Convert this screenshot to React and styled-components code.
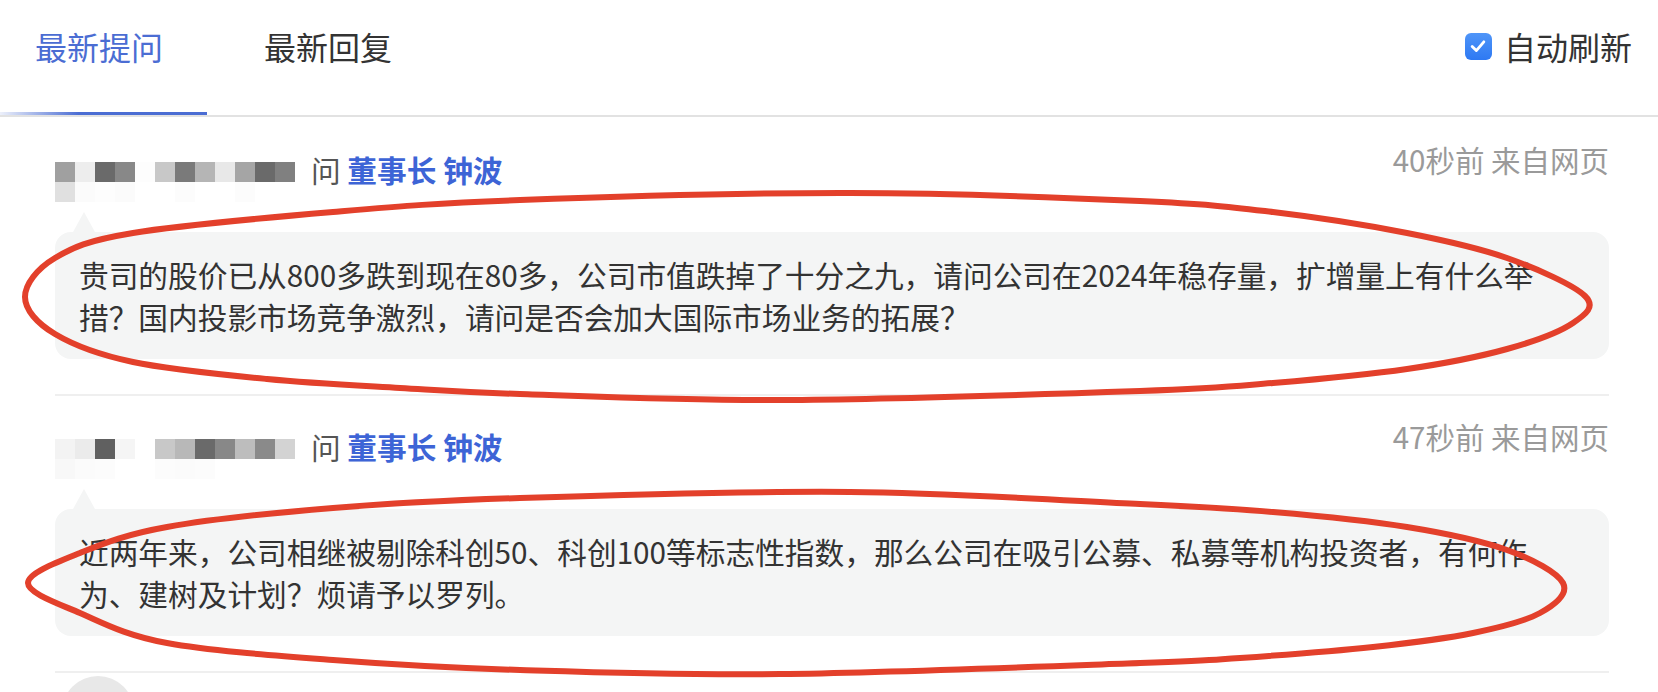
import React from "react";
import styled, { createGlobalStyle } from "styled-components";

const GlobalStyle = createGlobalStyle`
  *, *::before, *::after { box-sizing: border-box; }
  html, body { margin: 0; padding: 0; background: #ffffff; }
  body {
    font-family: "Noto Sans CJK SC", "Noto Sans", sans-serif;
    overflow: hidden;
  }
`;

const Page = styled.div`
  position: relative;
  width: 1658px;
  height: 692px;
  overflow: hidden;
  background: #ffffff;
`;

const Header = styled.header`
  display: flex;
  justify-content: space-between;
  align-items: stretch;
  height: 117px;
  padding: 0 26px 0 35px;
  border-bottom: 2px solid #e2e2e2;
`;

const Tabs = styled.nav`
  display: flex;
  gap: 101px;
`;

const Tab = styled.div`
  position: relative;
  padding-top: 26px;
  font-size: 32px;
  line-height: 40px;
  color: ${(p) => (p.$active ? "#4b6dd3" : "#333333")};

  &::after {
    content: "";
    display: ${(p) => (p.$active ? "block" : "none")};
    position: absolute;
    left: -35px;
    right: -44px;
    bottom: 0;
    height: 3px;
    background: linear-gradient(90deg, rgba(75, 109, 211, 0.1) 0%, #4b6dd3 38%);
  }
`;

const AutoRefresh = styled.label`
  display: flex;
  align-items: center;
  gap: 12px;
  align-self: flex-start;
  margin-top: 26px;
  height: 40px;
  font-size: 32px;
  line-height: 40px;
  color: #333333;
`;

const CheckBox = styled.span`
  display: flex;
  align-items: center;
  justify-content: center;
  width: 27px;
  height: 27px;
  border-radius: 6px;
  background: linear-gradient(180deg, #4f95f8 0%, #2e79f3 100%);
`;

const List = styled.div`
  display: flex;
  flex-direction: column;
  padding-top: 2px;
`;

const Item = styled.article`
  margin: 0 49px 0 55px;
  padding: 20px 0 35px;
  border-bottom: 2px solid #efefef;
`;

const Meta = styled.div`
  display: flex;
  justify-content: space-between;
  align-items: flex-start;
`;

const Author = styled.div`
  display: flex;
  align-items: flex-start;
  margin-top: 10.5px;
  font-size: 29.7px;
  line-height: 40px;
  color: #555555;
  white-space: pre;
`;

const Mosaic = styled.div`
  display: grid;
  grid-template-columns: repeat(12, 20px);
  grid-auto-rows: 20px;
  margin-top: 12px;
  margin-right: 16px;
`;

const Cell = styled.span`
  background: ${(p) => p.$c};
`;

const Names = styled.span`
  color: #3d64d6;
  font-weight: 700;
`;

const Time = styled.div`
  font-size: 29.5px;
  line-height: 40px;
  color: #9a9a9a;
`;

const Bubble = styled.div`
  position: relative;
  margin-top: 30.5px;
  padding: 22px 56px 22px 24px;
  background: #f4f5f5;
  border-radius: 16px;
  font-size: 29.7px;
  line-height: 41.5px;
  color: #333333;

  &::before {
    content: "";
    position: absolute;
    top: -20px;
    left: 18px;
    border-left: 11px solid transparent;
    border-right: 11px solid transparent;
    border-bottom: 20px solid #f4f5f5;
  }
`;

const NextItem = styled.div`
  margin: 0 49px 0 55px;
  padding: 3px 0 0 7px;
`;

const Avatar = styled.div`
  width: 72px;
  height: 72px;
  border-radius: 50%;
  background: #e8e8e8;
`;

const Annotations = styled.svg`
  position: absolute;
  top: 0;
  left: 0;
  width: 1658px;
  height: 692px;
  pointer-events: none;
`;

function smoothClosed(pts) {
  const n = pts.length;
  let d = `M${pts[0][0]},${pts[0][1]}`;
  for (let i = 0; i < n; i++) {
    const p0 = pts[(i - 1 + n) % n];
    const p1 = pts[i];
    const p2 = pts[(i + 1) % n];
    const p3 = pts[(i + 2) % n];
    const c1 = [p1[0] + (p2[0] - p0[0]) / 6, p1[1] + (p2[1] - p0[1]) / 6];
    const c2 = [p2[0] - (p3[0] - p1[0]) / 6, p2[1] - (p3[1] - p1[1]) / 6];
    d += ` C${c1[0].toFixed(1)},${c1[1].toFixed(1)} ${c2[0].toFixed(1)},${c2[1].toFixed(1)} ${p2[0]},${p2[1]}`;
  }
  return d + " Z";
}

const ring1 = [
  [25, 297], [55, 258], [133, 233], [333, 212], [520, 200], [850, 193],
  [1140, 201], [1273, 212], [1407, 233], [1507, 258], [1585, 296],
  [1573, 323], [1507, 349], [1407, 369], [1273, 383], [1140, 391],
  [780, 400], [520, 394], [400, 388], [267, 379], [133, 362], [55, 334],
];

const ring2 = [
  [28, 583], [80, 553], [167, 527], [333, 508], [520, 498], [850, 492],
  [1140, 504], [1273, 512], [1407, 527], [1507, 550], [1563, 583],
  [1540, 613], [1473, 633], [1373, 647], [1240, 658], [1140, 663],
  [780, 674], [520, 670], [333, 660], [167, 643], [80, 613],
];

const questions = [
  {
    mosaic: [
      "#a0a0a0", "#ededed", "#6a6a6a", "#888888", "#fdfdfd", "#c8c8c8",
      "#7a7a7a", "#b5b5b5", "#e8e8e8", "#a5a5a5", "#6a6a6a", "#808080",
      "#e0e0e0", "#fbfbfb", "#fdfdfd", "#fbfbfb", "#ffffff", "#ffffff",
      "#fcfcfc", "#ffffff", "#ffffff", "#fcfcfc", "#ffffff", "#ffffff",
    ],
    time: "40秒前 来自网页",
    text:
      "贵司的股价已从800多跌到现在80多，公司市值跌掉了十分之九，请问公司在2024年稳存量，扩增量上有什么举措？国内投影市场竞争激烈，请问是否会加大国际市场业务的拓展？",
  },
  {
    mosaic: [
      "#f3f3f3", "#ebebeb", "#606060", "#f5f5f5", "#ffffff", "#c8c8c8",
      "#b8b8b8", "#6a6a6a", "#888888", "#bdbdbd", "#8a8a8a", "#d3d3d3",
      "#f8f8f8", "#fbfbfb", "#fcfcfc", "#ffffff", "#ffffff", "#fcfcfc",
      "#fbfbfb", "#fcfcfc", "#ffffff", "#ffffff", "#ffffff", "#ffffff",
    ],
    time: "47秒前 来自网页",
    text:
      "近两年来，公司相继被剔除科创50、科创100等标志性指数，那么公司在吸引公募、私募等机构投资者，有何作为、建树及计划？烦请予以罗列。",
  },
];

export default function App() {
  return (
    <Page>
      <GlobalStyle />
      <Header>
        <Tabs>
          <Tab $active>最新提问</Tab>
          <Tab>最新回复</Tab>
        </Tabs>
        <AutoRefresh>
          <CheckBox>
            <svg width="20" height="20" viewBox="0 0 24 24" fill="none">
              <path
                d="M5 12.5 L10 17.5 L19 7"
                stroke="#ffffff"
                strokeWidth="3.4"
                strokeLinecap="round"
                strokeLinejoin="round"
              />
            </svg>
          </CheckBox>
          自动刷新
        </AutoRefresh>
      </Header>

      <List>
        {questions.map((q, i) => (
          <Item key={i}>
            <Meta>
              <Author>
                <Mosaic>
                  {q.mosaic.map((c, j) => (
                    <Cell key={j} $c={c} />
                  ))}
                </Mosaic>
                问 <Names>董事长 钟波</Names>
              </Author>
              <Time>{q.time}</Time>
            </Meta>
            <Bubble>{q.text}</Bubble>
          </Item>
        ))}
        <NextItem>
          <Avatar />
        </NextItem>
      </List>

      <Annotations viewBox="0 0 1658 692">
        <path d={smoothClosed(ring1)} fill="none" stroke="#e3402b" strokeWidth="6" />
        <path d={smoothClosed(ring2)} fill="none" stroke="#e3402b" strokeWidth="6" />
      </Annotations>
    </Page>
  );
}
